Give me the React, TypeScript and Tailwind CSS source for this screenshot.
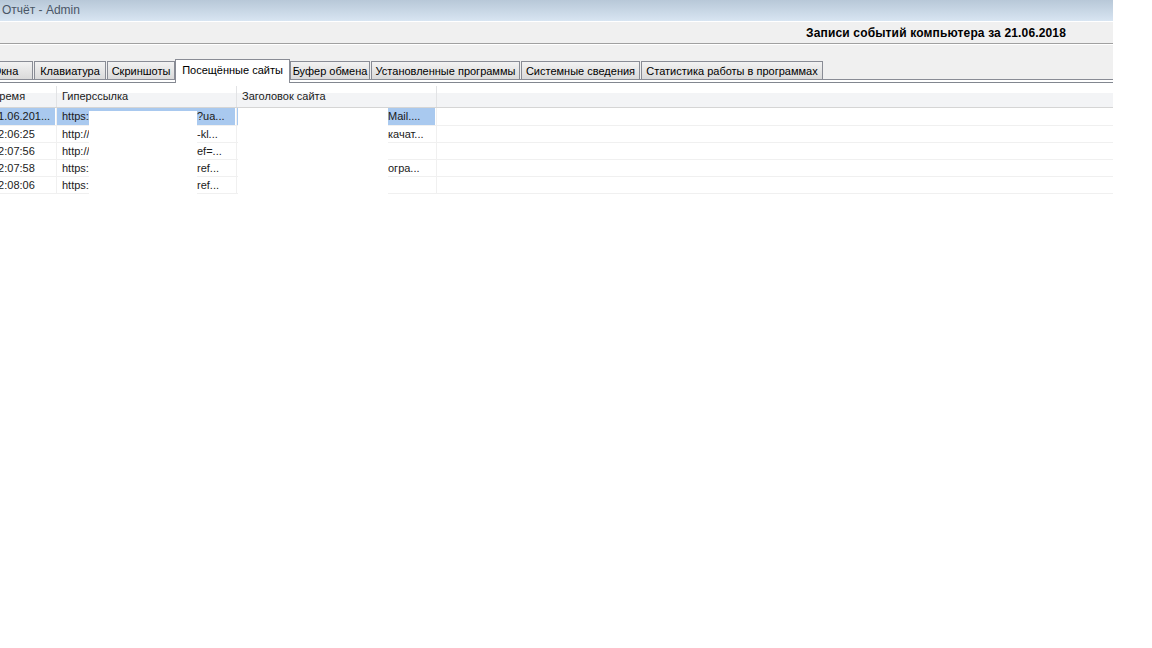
import React from "react";

type Tab = { label: string; cls: string; active?: boolean };

const tabs: Tab[] = [
  { label: "Окна", cls: "w-[46px] -ml-[13px] pr-[9px]" },
  { label: "Клавиатура", cls: "w-[72px] ml-px" },
  { label: "Скриншоты", cls: "w-[68px] ml-px" },
  { label: "Посещённые сайты", cls: "w-[115px]", active: true },
  { label: "Буфер обмена", cls: "w-[80px]" },
  { label: "Установленные программы", cls: "w-[149px] ml-px" },
  { label: "Системные сведения", cls: "w-[119px] ml-px" },
  { label: "Статистика работы в программах", cls: "w-[182px] ml-px" },
];

type Row = { time: string; lead: string; tail: string; title: string; selected?: boolean };

const rows: Row[] = [
  { time: "21.06.201...", lead: "https://", tail: "?ua...", title: "Mail....", selected: true },
  { time: "22:06:25", lead: "http://", tail: "-kl...", title: "качат..." },
  { time: "22:07:56", lead: "http://", tail: "ef=...", title: "" },
  { time: "22:07:58", lead: "https://", tail: "ref...", title: "огра..." },
  { time: "22:08:06", lead: "https://", tail: "ref...", title: "" },
];

function TabButton({ tab }: { tab: Tab }) {
  if (tab.active) {
    return (
      <div
        className={`${tab.cls} relative z-10 -mb-[4px] h-[24px] shrink-0 border border-b-0 border-[#898c95] bg-white pt-[3px] text-center text-[11px] leading-[14px] text-black`}
      >
        {tab.label}
      </div>
    );
  }
  return (
    <div
      className={`${tab.cls} h-[18px] shrink-0 border border-b-0 border-[#898c95] bg-gradient-to-b from-[#f2f2f2] to-[#dadada] pt-[2px] text-center text-[11px] leading-[14px] text-black`}
    >
      {tab.label}
    </div>
  );
}

export default function App() {
  return (
    <div className="flex h-[648px] w-[1152px] overflow-hidden bg-white font-['Liberation_Sans',Arial,sans-serif]">
      <div className="flex w-[1113px] shrink-0 flex-col overflow-hidden">
        {/* caption */}
        <div className="h-[21px] bg-gradient-to-b from-[#b8c8d8] to-[#d8e5f2] pl-[2px] text-[12px] leading-[20px] text-[#4a5666]">
          Отчёт - Admin
        </div>
        <div className="h-px bg-white" />

        {/* report header */}
        <div className="flex h-[22px] items-center justify-end border-b border-[#a0a0a0] bg-[#f0f0f0] pr-[47px] text-[12px] font-bold tracking-[0.15px] text-black">
          Записи событий компьютера за 21.06.2018
        </div>
        <div className="h-px bg-white" />

        {/* tab strip */}
        <div className="flex h-[35px] items-end border-b border-[#898c95] bg-[#f0f0f0]">
          {tabs.map((t) => (
            <TabButton key={t.label} tab={t} />
          ))}
        </div>
        <div className="h-[2px] bg-white" />

        {/* list view */}
        <div className="relative flex-1 border-t border-[#828790] bg-white text-[11px] text-[#1a1a1a]">
          <div className="flex h-[25px] border-b border-[#d5d5d5] bg-[linear-gradient(#ffffff_0,#ffffff_42%,#f3f4f6_42%,#f3f4f6_100%)] pt-[3px] leading-[21px]">
            <div className="-ml-[14px] w-[71px] shrink-0 border-r border-[#e2e3e5] pl-[6px]">Время</div>
            <div className="w-[180px] shrink-0 border-r border-[#e2e3e5] pl-[5px]">Гиперссылка</div>
            <div className="w-[200px] shrink-0 border-r border-[#e2e3e5] pl-[5px]">Заголовок сайта</div>
            <div className="flex-1" />
          </div>

          {rows.map((r, i) => (
            <div
              key={i}
              className={i === 0 ? "flex h-[17px] leading-[17px]" : "flex h-[17px] border-t border-[#f0f0f0] leading-[16px]"}
            >
              <div className="-ml-[14px] w-[71px] shrink-0 border-r border-[#f0f0f0] pr-px">
                <div className={r.selected ? "h-full truncate bg-[#a9c9ef] pl-[6px]" : "h-full truncate pl-[6px]"}>
                  {r.time}
                </div>
              </div>
              <div className="w-[180px] shrink-0 border-r border-[#f0f0f0] pr-px">
                <div className={r.selected ? "flex h-full bg-[#a9c9ef] pl-[5px]" : "flex h-full pl-[5px]"}>
                  <span className="w-[135px] shrink-0">{r.lead}</span>
                  <span>{r.tail}</span>
                </div>
              </div>
              <div className="w-[200px] shrink-0 border-r border-[#f0f0f0] pr-px">
                <div className={r.selected ? "h-full bg-[#a9c9ef] pl-[151px]" : "h-full pl-[151px]"}>
                  {r.title}
                </div>
              </div>
              <div className="flex-1" />
            </div>
          ))}
          <div className="h-px bg-[#f0f0f0]" />

          {/* masked blocks */}
          <div className="absolute left-[89px] top-[28px] h-[83px] w-[108px] bg-white" />
          <div className="absolute left-[238px] top-[25px] h-[88px] w-[150px] bg-white" />
        </div>
      </div>
    </div>
  );
}
